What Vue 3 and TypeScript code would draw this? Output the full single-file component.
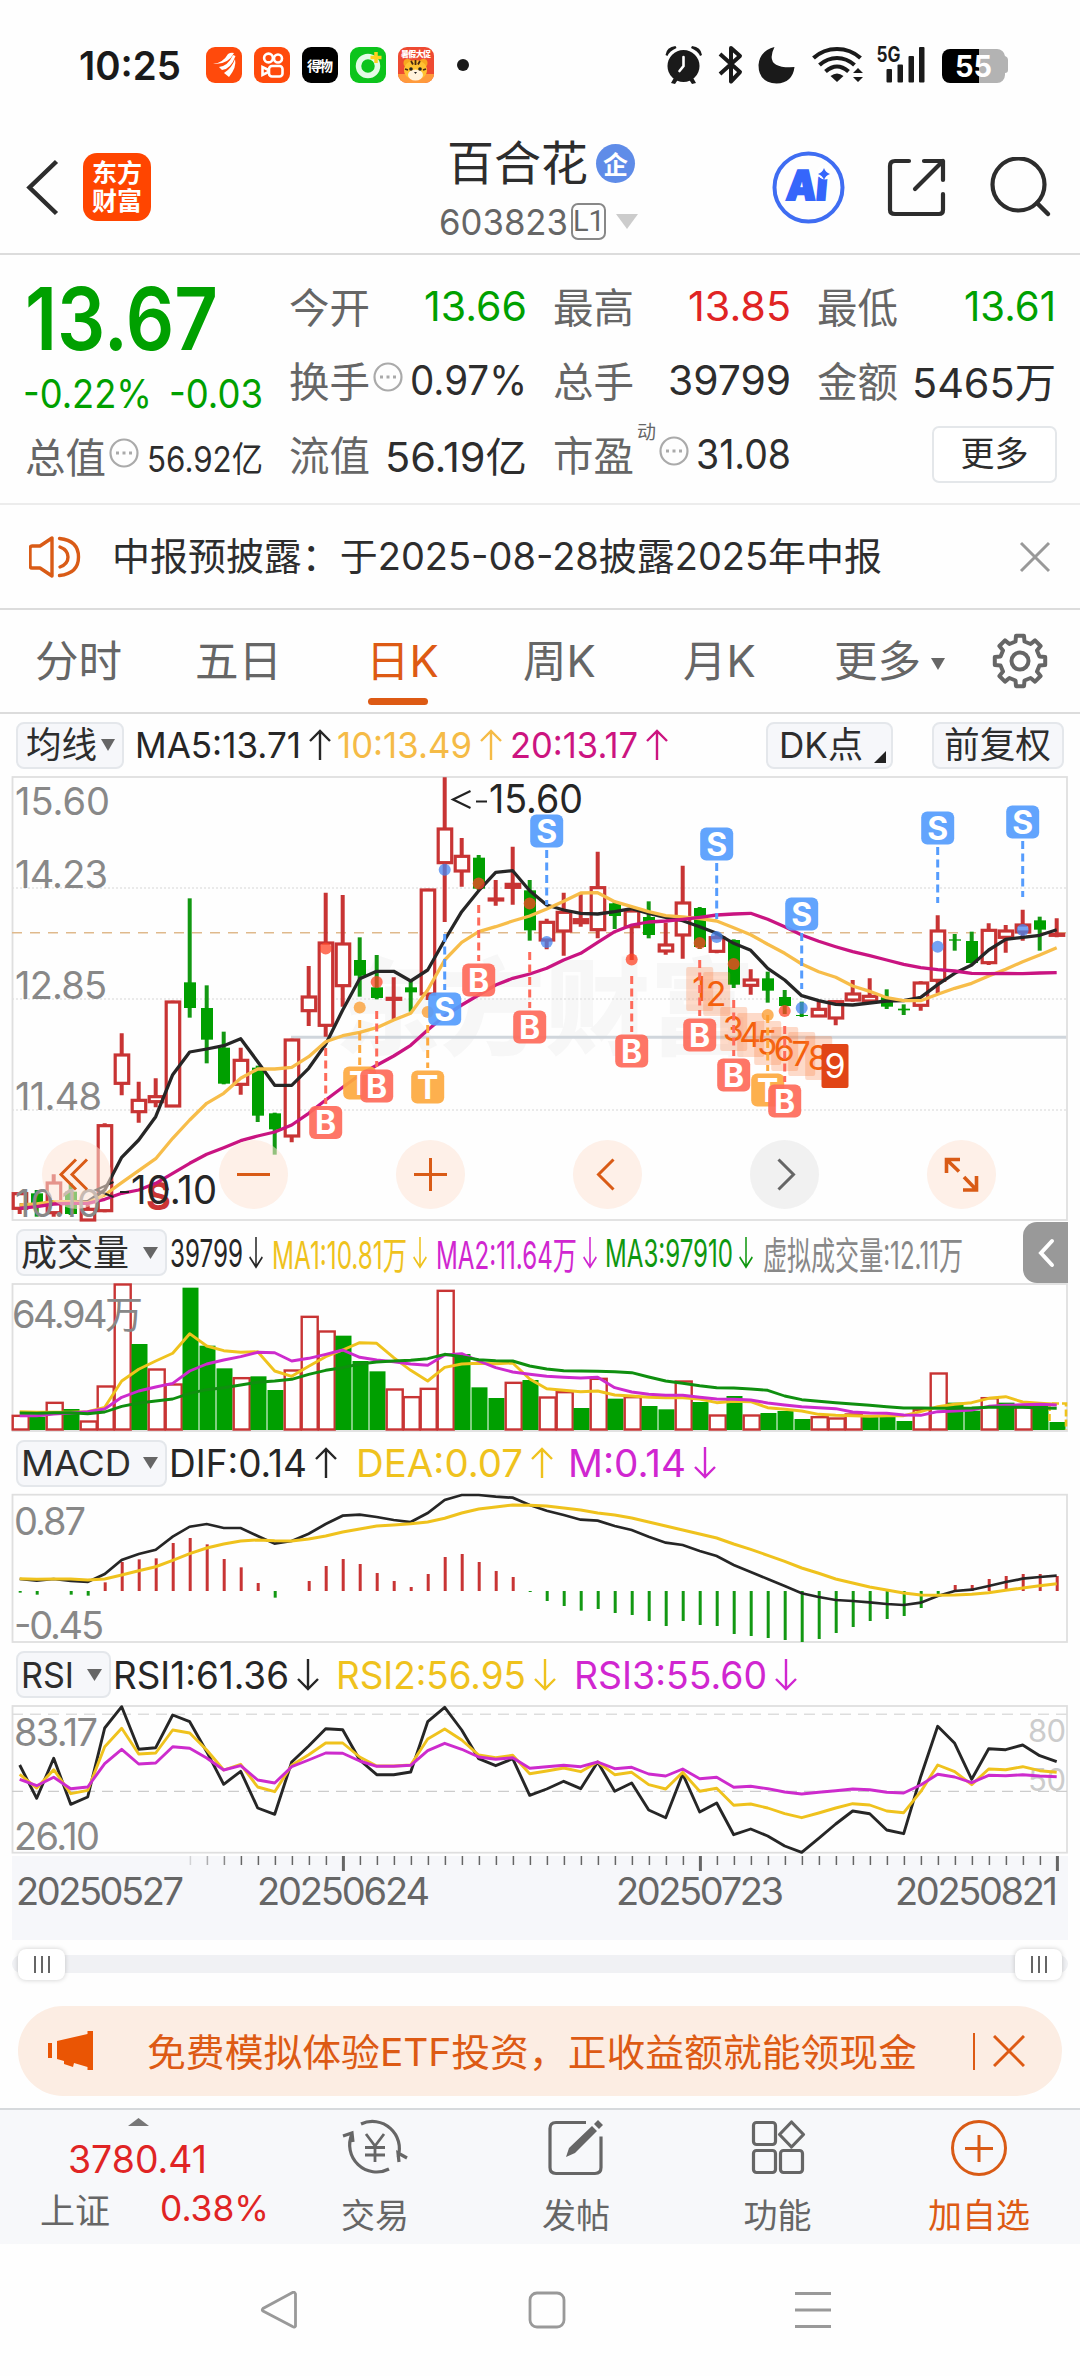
<script setup lang="ts">
import { h } from 'vue'
import type { FunctionalComponent, ObjectDirective } from 'vue'

type Row = [number, number, number, number, number]

// Squeezes or widens a label so that it takes exactly the given width.
const vFit: ObjectDirective<HTMLElement, number> = {
  mounted(el, { value }) {
    const natural = el.getBoundingClientRect().width
    if (!natural) return
    el.style.transformOrigin = '0 50%'
    el.style.transform = `scaleX(${value / natural})`
    el.style.marginRight = `${value - natural}px`
  },
}

const Arrow: FunctionalComponent<{ up?: boolean; w?: number }> = (p) =>
  h('svg', { width: p.w ?? 22, height: 34, viewBox: '0 0 22 34', preserveAspectRatio: 'none', fill: 'none', stroke: 'currentColor', 'stroke-width': 2.4 }, [
    h('path', { d: p.up ? 'M11 32V3M1 13L11 3l10 10' : 'M11 1v30M1 21l10 10 10-10' }),
  ])
Arrow.props = { up: Boolean, w: Number }

const cx = (i: number) => 19.7 + 17 * i
const path = (ys: number[], f: (v: number) => number) =>
  ys.map((v, i) => `${i ? 'L' : 'M'}${cx(i).toFixed(1)} ${f(v).toFixed(1)}`).join('')

// Price panel: 1 = rising, 0 = falling; high, body top, body bottom, low.
const py = (v: number) => 760 + v / 3
const candles: Row[] = [
  [1, 1297, 1298, 1345, 1362], [0, 1290, 1300, 1330, 1370], [1, 1243, 1266, 1358, 1370], [0, 1270, 1295, 1362, 1365],
  [1, 1330, 1345, 1380, 1382], [1, 1090, 1094, 1352, 1357], [1, 820, 882, 970, 1006], [1, 965, 1018, 1055, 1088],
  [1, 955, 1007, 1025, 1042], [1, 722, 723, 1038, 1040], [0, 415, 667, 744, 773], [0, 676, 744, 839, 910],
  [0, 815, 863, 971, 973], [1, 863, 898, 973, 1004], [0, 917, 923, 1067, 1086], [0, 1058, 1060, 1108, 1184],
  [1, 836, 837, 1128, 1147], [1, 618, 708, 752, 798], [1, 398, 546, 796, 830], [1, 405, 549, 677, 740],
  [0, 532, 600, 647, 710], [0, 585, 682, 714, 718], [1, 652, 712, 718, 777], [0, 660, 682, 697, 755],
  [1, 386, 387, 702, 720], [1, 52, 204, 308, 486], [1, 234, 286, 333, 380], [0, 285, 293, 386, 390],
  [1, 360, 414, 417, 437], [1, 260, 370, 382, 434], [0, 360, 391, 511, 542], [1, 476, 484, 540, 568],
  [1, 398, 454, 513, 587], [1, 400, 476, 488, 500], [1, 275, 380, 509, 535], [0, 425, 430, 468, 507],
  [1, 440, 450, 500, 600], [0, 424, 471, 525, 535], [1, 488, 552, 573, 584], [1, 317, 426, 525, 596],
  [0, 441, 444, 561, 567], [1, 520, 530, 574, 580], [0, 538, 540, 674, 684], [1, 628, 657, 676, 704],
  [0, 635, 655, 692, 728], [0, 690, 711, 738, 762], [0, 725, 765, 768, 771], [1, 720, 745, 768, 770],
  [1, 720, 722, 774, 796], [1, 660, 699, 720, 725], [1, 655, 706, 723, 724], [0, 688, 711, 740, 747],
  [0, 733, 746, 751, 765], [1, 664, 666, 736, 752], [1, 466, 510, 661, 700], [0, 522, 538, 542, 572],
  [0, 515, 543, 609, 611], [1, 490, 508, 608, 615], [1, 495, 510, 532, 578], [1, 449, 492, 516, 542],
  [0, 470, 481, 509, 572], [1, 475, 520, 523, 532],
]
const ma5 = [1335, 1335, 1325, 1325, 1325, 1290, 1192, 1140, 1070, 944, 876, 867, 857, 836, 905, 976, 976, 925, 853, 750, 656, 634, 634, 663, 630, 540, 455, 392, 337, 332, 392, 435, 450, 460, 462, 455, 446, 460, 472, 482, 500, 520, 550, 571, 625, 660, 707, 722, 733, 735, 729, 723, 722, 712, 674, 640, 615, 570, 538, 532, 526, 509]
const ma10 = [1335, 1332, 1325, 1325, 1328, 1305, 1268, 1232, 1196, 1135, 1080, 1030, 1000, 955, 927, 927, 922, 890, 845, 827, 817, 803, 780, 760, 690, 600, 547, 515, 500, 483, 468, 447, 424, 399, 398, 425, 440, 455, 467, 471, 476, 483, 503, 524, 553, 580, 612, 635, 652, 678, 694, 713, 722, 722, 703, 685, 670, 648, 628, 605, 585, 563]
const ma20 = [1345, 1340, 1332, 1330, 1330, 1318, 1300, 1290, 1270, 1240, 1210, 1183, 1163, 1142, 1128, 1116, 1095, 1060, 1020, 982, 945, 916, 888, 856, 810, 768, 735, 705, 675, 655, 642, 625, 600, 580, 547, 515, 495, 486, 483, 478, 472, 465, 462, 460, 478, 500, 525, 544, 560, 575, 587, 600, 613, 623, 629, 633, 640, 641, 640, 641, 639, 638]

// Signal badges: letter, candle index, badge centre, dashed line from / to, dot.
type Mark = ['B' | 'S' | 'T', number, number, number, number, number]
const marks: Mark[] = [
  ['B', 18, 1122.5, 1048, 1104, 948.5], ['T', 20, 1083, 1020, 1065, 1007.5], ['B', 21, 1086, 1011, 1067, 982],
  ['T', 24, 1087, 1025, 1068, 1012], ['S', 25, 1009, 934, 990, 869.7], ['B', 27, 980, 905, 961, 883.5],
  ['B', 30, 1027, 952, 1008, 903.5], ['S', 31, 831, 850, 905, 942], ['B', 36, 1051, 976, 1032, 959.5],
  ['B', 40, 1035, 960, 1016, 943], ['S', 41, 844, 863, 919, 937], ['B', 42, 1075, 1000, 1056, 964],
  ['T', 44, 1090, 1015, 1071, 1015], ['B', 45, 1101, 1026, 1082, 1011], ['S', 46, 914, 933, 989, 1008],
  ['S', 54, 828, 847, 903, 946.7], ['S', 59, 822, 841, 897, 930],
]
const markColor = { B: '#fe6a5a', S: '#559cfd', T: '#fda93f' }
const counts: [string, number, number][] = [
  ['1', 40, 967], ['2', 41, 972], ['3', 42, 1007], ['4', 43, 1013], ['5', 44, 1021], ['6', 45, 1027], ['7', 46, 1032], ['8', 47, 1036],
]

// Volume panel: tops of the bars, negative = falling day.
const vy = (v: number) => 1215 + v / 3
const volumes = [601, -605, 562, -582, 618, 513, 207, -387, 462, 507, -218, -392, -460, 488, -484, -525, 465, 304, 348, -362, -438, -469, 522, 545, 520, 226, -417, -517, -549, 502, -495, 546, 530, -579, 490, -551, 545, -573, -583, 498, -561, 600, -543, 600, -594, -588, -612, 605, 609, 597, -603, -605, -618, 583, 474, -563, -587, 548, -563, 575, -571, -621]
const v1 = [590, 592, 592, 592, 590, 577, 498, 463, 438, 415, 356, 393, 407, 412, 410, 468, 484, 454, 425, 405, 383, 385, 428, 466, 498, 457, 447, 445, 446, 444, 492, 521, 526, 530, 528, 540, 543, 547, 548, 548, 552, 563, 559, 560, 578, 583, 588, 598, 601, 602, 604, 602, 602, 590, 575, 568, 563, 550, 545, 561, 565, 568]
const v2 = [602, 602, 597, 594, 590, 582, 547, 528, 516, 505, 468, 447, 435, 425, 412, 413, 438, 430, 418, 405, 427, 435, 440, 447, 451, 420, 416, 438, 458, 471, 478, 484, 487, 489, 487, 518, 531, 538, 541, 541, 547, 552, 553, 555, 564, 570, 575, 578, 581, 591, 594, 595, 600, 601, 590, 588, 585, 574, 571, 569, 568, 570]
const v3 = [594, 595, 593, 593, 596, 591, 574, 564, 558, 552, 535, 524, 518, 510, 502, 498, 493, 478, 466, 458, 447, 441, 438, 436, 431, 418, 425, 434, 437, 438, 453, 462, 467, 468, 469, 470, 473, 486, 498, 505, 512, 518, 519, 522, 526, 543, 554, 559, 563, 567, 571, 575, 579, 579, 580, 580, 579, 577, 577, 577, 579, 580]

// MACD and RSI panels
const my = (v: number) => 1480 + v / 3
const hist = [338, 344, 333, 344, 347, 307, 246, 238, 235, 189, 174, 193, 237, 262, 309, 353, 333, 303, 258, 237, 252, 279, 303, 321, 282, 231, 222, 246, 273, 291, 336, 363, 378, 392, 387, 399, 405, 423, 438, 423, 435, 438, 462, 468, 474, 480, 486, 477, 459, 441, 423, 417, 408, 384, 343, 315, 315, 297, 288, 282, 282, 288]
const dif = [297, 302, 297, 303, 306, 282, 240, 222, 209, 170, 140, 132, 144, 144, 168, 191, 183, 161, 132, 107, 104, 111, 120, 126, 99, 60, 45, 45, 50, 53, 75, 92, 105, 119, 122, 138, 150, 170, 188, 195, 213, 228, 255, 276, 297, 318, 340, 351, 360, 363, 367, 372, 375, 368, 348, 333, 329, 318, 306, 296, 291, 287]
const dea = [296, 298, 297, 297, 300, 297, 285, 272, 260, 241, 221, 204, 192, 183, 180, 182, 183, 177, 168, 156, 147, 138, 135, 131, 126, 115, 99, 87, 81, 75, 76, 78, 84, 90, 99, 105, 114, 126, 138, 150, 162, 174, 192, 208, 226, 244, 264, 280, 297, 309, 321, 330, 339, 345, 346, 345, 343, 338, 331, 324, 317, 311]
const rsi1 = [855, 955, 835, 973, 951, 744, 680, 808, 803, 705, 725, 815, 913, 874, 984, 1003, 846, 798, 746, 749, 840, 884, 884, 876, 725, 682, 750, 836, 857, 836, 946, 927, 904, 926, 846, 934, 909, 990, 1013, 882, 996, 969, 1064, 1047, 1068, 1098, 1117, 1075, 1032, 993, 1001, 1050, 1061, 890, 739, 790, 898, 806, 809, 795, 827, 845]
const rsi2 = [883, 924, 869, 941, 931, 800, 745, 822, 819, 750, 759, 810, 870, 853, 921, 935, 856, 824, 789, 789, 831, 858, 858, 855, 777, 747, 780, 825, 833, 826, 881, 873, 864, 875, 846, 884, 877, 914, 927, 877, 934, 925, 976, 972, 984, 1001, 1013, 999, 984, 971, 975, 993, 998, 935, 855, 875, 914, 867, 869, 860, 872, 877]
const rsi3 = [898, 917, 892, 926, 921, 851, 808, 852, 849, 800, 805, 834, 870, 857, 900, 909, 860, 840, 819, 820, 843, 859, 859, 856, 812, 790, 808, 831, 838, 833, 865, 860, 856, 860, 846, 866, 862, 882, 888, 867, 896, 892, 922, 919, 926, 936, 942, 937, 932, 927, 929, 937, 939, 915, 883, 891, 908, 886, 887, 884, 888, 890]

const ticks = Array.from({ length: 52 }, (_, k) => k + 10)
const isMajor = (i: number) => i === 19 || i === 40 || i === 61
const gear = (() => {
  const pts: string[] = []
  for (let k = 0; k < 8; k++) {
    for (const [off, r] of [[-13, 20], [-9, 25.5], [9, 25.5], [13, 20]]) {
      const a = ((k * 45 + off - 90) * Math.PI) / 180
      pts.push(`${(28 + r * Math.cos(a)).toFixed(1)},${(28 + r * Math.sin(a)).toFixed(1)}`)
    }
  }
  return pts.join(' ')
})()
</script>

<template>
  <div class="screen">
    <div class="status">
      <span v-fit="102" class="clock">10:25</span>
      <div class="apps">
        <svg width="36" height="36" viewBox="0 0 36 36"><rect width="36" height="36" rx="9" fill="#ff4a0c" /><path d="M7 17Q17 16 22 7q3-2 6-1Q22 18 7 17zM13 20q9-1 14-12l2.500 1Q25 22 16 23zM18 26q8-5 11-14 2 8-6 18z" fill="#fff" /></svg>
        <svg width="36" height="36" viewBox="0 0 36 36"><rect width="36" height="36" rx="9" fill="#ff4a0c" /><g fill="none" stroke="#fff" stroke-width="2.6"><circle cx="14.500" cy="11" r="4.400" /><circle cx="24" cy="11.500" r="4" /><rect x="15" y="19" width="13.500" height="10.500" rx="3" /><path d="M14.500 23l-6-3v8l6-3z" /></g></svg>
        <svg width="36" height="36" viewBox="0 0 36 36"><rect width="36" height="36" rx="9" fill="#000" /><text x="5" y="23.500" font-size="14" font-weight="700" fill="#fff" textLength="26">得物</text></svg>
        <svg width="36" height="36" viewBox="0 0 36 36"><rect width="36" height="36" rx="9" fill="#0cc41c" /><circle cx="18" cy="19" r="9.500" fill="none" stroke="#e4fbe6" stroke-width="5.500" /><path d="M26 5v11M20.500 10.500h11" stroke="#ffd21e" stroke-width="3.500" /></svg>
        <svg width="36" height="36" viewBox="0 0 36 36"><rect width="36" height="36" rx="9" fill="#ee4a32" /><text x="3" y="9.500" font-size="8" font-weight="900" fill="#fff" textLength="30">暑假大促</text><path d="M0 27h36a9 9 0 0 1-9 9H9a9 9 0 0 1-9-9z" fill="#ff9a3c" /><circle cx="9.500" cy="16" r="4" fill="#f7a81f" /><circle cx="25.500" cy="16" r="4" fill="#f7a81f" /><ellipse cx="17.500" cy="23" rx="11.500" ry="10" fill="#ffc232" /><ellipse cx="17.500" cy="28" rx="7.500" ry="5.500" fill="#fff3dc" /><circle cx="13" cy="22" r="1.800" fill="#222" /><circle cx="22" cy="22" r="1.800" fill="#222" /><path d="M17.500 13v5M13 14l2 3.500M22 14l-2 3.500M7 22l3 1M28 22l-3 1" stroke="#4a2a10" stroke-width="1.800" /><path d="M16 25h3l-1.500 2z" fill="#222" /></svg>
      </div>
      <i class="dot"></i>
      <svg class="sys" width="350" height="44" viewBox="660 43 350 44">
        <g fill="#1a1a1a">
          <circle cx="683.500" cy="66" r="16" /><path d="M665.500 55q1-8 10-9l1 2q-7 3-9 8zM702 55q-1-8-10-9l-1 2q7 3 9 8z" />
          <path d="M671 83l4-7 4 2-4 6zM696 83l-4-7-4 2 4 6z" />
          <path d="M774.500 47q-11 22 20 20-2 16-18 16.500-18-1-18-18.500 1-14 16-18z" />
          <path d="M837 82l-6.500-6q6.500-5 13 0z" /><path d="M858 68l5 5h-10zM858 82l5-5h-10z" />
          <rect x="886.500" y="69" width="5.500" height="13.500" rx="1" /><rect x="897.500" y="64.500" width="5.500" height="18" rx="1" /><rect x="908.500" y="56" width="5.500" height="26.500" rx="1" /><rect x="919" y="47" width="5.500" height="35.500" rx="1" />
          <text x="876.500" y="61.500" font-size="21" font-weight="700" textLength="24" lengthAdjust="spacingAndGlyphs">5G</text>
        </g>
        <path d="M683.500 57v9l-4 5" fill="none" stroke="#fff" stroke-width="2.600" stroke-linecap="round" />
        <path d="M720 54l20 18-9 9.500V48l9 8-20 18" fill="none" stroke="#1a1a1a" stroke-width="4" stroke-linejoin="round" />
        <g fill="none" stroke="#1a1a1a" stroke-width="4.200"><path d="M813.500 58q10-9 23.500-9t23.500 9" /><path d="M819.500 65q8-7 17.500-7t17.500 7" /><path d="M825.500 71.500q6-5 11.500-5t11.500 5" /></g>
        <path d="M950 49h30v34h-30a8 8 0 0 1-8-8V57a8 8 0 0 1 8-8z" fill="#000" /><path d="M979 49h18a8 8 0 0 1 8 7q3 1 3 4v10q0 3-3 3v2a8 8 0 0 1-8 8h-18z" fill="#b3b3b3" />
        <text x="955" y="77" font-size="30" font-weight="700" fill="#fff" textLength="37" lengthAdjust="spacingAndGlyphs">55</text>
      </svg>
    </div>

    <header class="head">
      <svg class="back" width="34" height="58" viewBox="25 159 34 58"><path d="M56.500 161.500L29.500 187.500 56.500 213.500" fill="none" stroke="#2d2d2d" stroke-width="4.500" /></svg>
      <div class="logo"><b>东方</b><b>财富</b></div>
      <div class="title">
        <div class="name"><span>百合花</span><em>企</em></div>
        <div class="code"><span v-fit="129">603823</span><i>L1</i><svg width="22" height="16"><path d="M0 0h22L11 15z" fill="#ccc" /></svg></div>
      </div>
      <div class="tools">
        <svg width="74" height="74" viewBox="771 150 74 74"><circle cx="808.500" cy="187.500" r="34" fill="none" stroke="#3f6df2" stroke-width="4" /><g transform="skewX(-5)"><text x="803" y="200" font-size="41" font-weight="900" fill="#3566fb" stroke="#3566fb" stroke-width="2" textLength="41" lengthAdjust="spacingAndGlyphs">Ai</text></g><circle cx="825" cy="172" r="7.500" fill="#fff" /><path d="M824 168q1.500 4.500 6 6-4.500 1.500-6 6-1.500-4.500-6-6 4.500-1.500 6-6z" fill="#3566fb" /></svg>
        <svg width="62" height="62" viewBox="886 157 62 62"><path d="M909 161h-14q-5 0-5 5v44q0 4 5 4h44q4 0 4-4v-16M924 161h19v19M943 161l-28 28" fill="none" stroke="#2d2d2d" stroke-width="4.200" stroke-linecap="round" stroke-linejoin="round" /></svg>
        <svg width="62" height="62" viewBox="990 157 62 62"><circle cx="1018.500" cy="184.500" r="26" fill="none" stroke="#2d2d2d" stroke-width="4.200" /><path d="M1037 203l11 11" stroke="#2d2d2d" stroke-width="4.500" stroke-linecap="round" /></svg>
      </div>
    </header>

    <section class="quote">
      <div class="main">
        <div class="price green"><span v-fit="193">13.67</span></div>
        <div class="chg green"><span v-fit="129">-0.22%</span><span v-fit="94">-0.03</span></div>
        <div class="cell last"><label>总值</label><svg class="tip" width="30" height="30"><circle cx="15" cy="15" r="13.500" /><path d="M7 13.500h3v3H7zM13.500 13.500h3v3h-3zM20 13.500h3v3h-3z" /></svg><span v-fit="116" class="sm">56.92亿</span></div>
      </div>
      <div class="cells">
        <div class="cell"><label>今开</label><span v-fit="103" class="green">13.66</span></div>
        <div class="cell"><label>最高</label><span v-fit="103" class="red">13.85</span></div>
        <div class="cell"><label>最低</label><span v-fit="92" class="green">13.61</span></div>
        <div class="cell"><label>换手</label><svg class="tip" width="30" height="30"><circle cx="15" cy="15" r="13.500" /><path d="M7 13.500h3v3H7zM13.500 13.500h3v3h-3zM20 13.500h3v3h-3z" /></svg><span v-fit="117">0.97%</span></div>
        <div class="cell"><label>总手</label><span v-fit="123">39799</span></div>
        <div class="cell"><label>金额</label><span v-fit="144">5465万</span></div>
        <div class="cell"><label>流值</label><span v-fit="142">56.19亿</span></div>
        <div class="cell pe"><label>市盈</label><sup>动</sup><svg class="tip" width="30" height="30"><circle cx="15" cy="15" r="13.500" /><path d="M7 13.500h3v3H7zM13.500 13.500h3v3h-3zM20 13.500h3v3h-3z" /></svg><span v-fit="95">31.08</span></div>
        <div class="cell end"><button class="more">更多</button></div>
      </div>
    </section>

    <section class="notice">
      <svg width="52" height="46" viewBox="29 533 52 46"><g fill="none" stroke="#d95b16" stroke-width="3.400"><path d="M52 537v38l-12-8h-8q-2 0-2-3v-16q0-3 2-3h8z" stroke-linejoin="round" /><path d="M60 546q8 3 8 10t-8 10M59.500 537.500q19 2 19 18.500t-19 18.500" stroke-linecap="round" /></g></svg>
      <p><span v-fit="770">中报预披露：于2025-08-28披露2025年中报</span></p>
      <svg width="32" height="32"><path d="M2 2l28 28M30 2L2 30" stroke="#999" stroke-width="3" /></svg>
    </section>

    <nav class="tabs">
      <span>分时</span><span>五日</span><span class="on">日K</span><span>周K</span><span>月K</span>
      <span>更多<svg width="14" height="12"><path d="M0 0h14L7 12z" fill="#666" /></svg></span>
      <svg width="56" height="56"><polygon :points="gear" fill="none" stroke="#666" stroke-width="4" stroke-linejoin="round" /><circle cx="28" cy="28" r="8.500" fill="none" stroke="#666" stroke-width="4" /></svg>
    </nav>

    <div class="legend ma">
      <button class="pick p0"><span v-fit="71">均线</span><svg width="14" height="12"><path d="M0 0h14L7 12z" fill="#666" /></svg></button>
      <span class="it k"><span v-fit="166">MA5:13.71</span><Arrow :up="true" /></span>
      <span class="it y"><span v-fit="135">10:13.49</span><Arrow :up="true" /></span>
      <span class="it p"><span v-fit="128">20:13.17</span><Arrow :up="true" /></span>
      <button class="pick dk"><span v-fit="84">DK点</span><svg width="12" height="12"><path d="M12 0v12H0z" fill="#222" /></svg></button>
      <button class="pick fq"><span v-fit="107">前复权</span></button>
    </div>

    <svg class="chart" width="1080" height="446" viewBox="0 776 1080 446">
      <text x="335" y="1046" font-size="105" font-weight="900" fill="#f7f7f7">东方财富</text>
      <path d="M12 888H1067M12 999H1067M12 1110H1067" stroke="#e3e3e3" stroke-width="1.500" stroke-dasharray="2 2" />
      <path d="M291 1037.300H1067" stroke="#d0d6dc" stroke-width="3" />
      <rect x="12.500" y="777" width="1054.500" height="443" fill="none" stroke="#dfdfdf" stroke-width="1.800" />
      <path d="M12 932.700H1067" stroke="#dfb98c" stroke-width="1.600" stroke-dasharray="10 8" />
      <text x="146" y="1210" font-size="38" font-weight="700" fill="#cb3434">S</text>
      <g v-for="(c, i) in candles" :key="i">
        <template v-if="c[0]">
          <path :d="`M${cx(i)} ${py(c[1])}V${py(c[2])}M${cx(i)} ${py(c[3])}V${py(c[4])}`" stroke="#c83434" stroke-width="4" />
          <rect :x="cx(i) - 6.500" :y="py(c[2]) + 1" width="13.500" :height="Math.max(1, py(c[3]) - py(c[2]) - 1)" fill="#fff" stroke="#c83434" stroke-width="3.200" />
        </template>
        <template v-else>
          <path :d="`M${cx(i)} ${py(c[1])}V${py(c[4])}`" stroke="#129812" stroke-width="4" />
          <rect :x="cx(i) - 5.700" :y="py(c[2])" width="12" :height="py(c[3]) - py(c[2])" fill="#009f00" />
        </template>
      </g>
      <g fill="none" stroke-width="3.300" stroke-linejoin="round">
        <path :d="path(ma5, py)" stroke="#262626" /><path :d="path(ma10, py)" stroke="#f7bd4a" /><path :d="path(ma20, py)" stroke="#c91481" />
      </g>
      <g class="lbl">
        <text x="15" y="815" textLength="95">15.60</text><text x="15" y="888" textLength="93">14.23</text>
        <text x="15" y="999" textLength="92">12.85</text><text x="15" y="1110" textLength="87">11.48</text><text x="15" y="1217" textLength="86">10.10</text>
      </g>
      <g fill="none" stroke="#222" stroke-width="2.200"><path d="M470.500 791L453 799.500l17.500 8.500M476 801.500h11" /><path d="M113.500 1182L96 1190l17.500 7M120 1192h9" /></g>
      <text x="489" y="813" font-size="39" fill="#262626" textLength="94" lengthAdjust="spacingAndGlyphs">15.60</text>
      <text x="131" y="1203.500" font-size="39" fill="#262626" textLength="86" lengthAdjust="spacingAndGlyphs">10.10</text>

      <g v-for="c in counts" :key="c[0]">
        <rect :x="cx(c[1]) - 13.500" :y="c[2]" width="27" height="44" rx="2" fill="#fb7a3c" fill-opacity=".27" />
        <text :x="cx(c[1]) - 0.500" :y="c[2] + 34" font-size="34" fill="#f4600c" text-anchor="middle">{{ c[0] }}</text>
      </g>
      <rect x="821.500" y="1044" width="27" height="44" rx="2" fill="#e14516" /><text x="835" y="1078" font-size="34" fill="#fff" text-anchor="middle">9</text>
      <g v-for="(m, i) in marks" :key="'m' + i">
        <path :d="`M${cx(m[1])} ${m[3]}V${m[4]}`" :stroke="markColor[m[0]]" stroke-width="3" stroke-dasharray="8 4.500" />
        <circle :cx="cx(m[1])" :cy="m[5]" r="6" :fill="m[0] === 'S' ? '#4684f0' : m[0] === 'T' ? '#fb9a2a' : '#ff4326'" fill-opacity=".75" />
        <rect :x="cx(m[1]) - 16.500" :y="m[2] - 16.500" width="33" height="33" rx="6" :fill="markColor[m[0]]" fill-opacity=".92" />
        <text :x="cx(m[1])" :y="m[2] + 11.500" font-size="32" font-weight="700" fill="#fff" text-anchor="middle">{{ m[0] }}</text>
      </g>

      <g fill="#fee4d6" fill-opacity=".55"><circle cx="76.500" cy="1174.500" r="34.500" /><circle cx="253.500" cy="1174.500" r="34.500" /><circle cx="430.500" cy="1174.500" r="34.500" /><circle cx="607.500" cy="1174.500" r="34.500" /><circle cx="961.500" cy="1174.500" r="34.500" /></g>
      <circle cx="784.500" cy="1174.500" r="34.500" fill="#e8e8e8" fill-opacity=".6" />
      <g fill="none" stroke="#d95b16" stroke-width="3"><path d="M76 1159.500l-15 15 15 15M87 1159.500l-15 15 15 15M237 1174.500h33M414 1174.500h33M430.500 1158v33M613.500 1159.500l-15 15 15 15" /><path d="M960 1159.500h-13.500v13.500M946.500 1159.500l12.500 12M963 1190h13.500v-14M976.500 1190l-12.500-13" stroke-width="3.600" /></g>
      <path d="M778.500 1159.500l15 15-15 15" fill="none" stroke="#666" stroke-width="3" />
    </svg>

    <div class="legend vol">
      <button class="pick p1"><span v-fit="108">成交量</span><svg width="15" height="12"><path d="M0 0h15L7.500 12z" fill="#666" /></svg></button>
      <span class="it k"><span v-fit="73">39799</span><Arrow :w="14" /></span>
      <span class="it g1"><span v-fit="135">MA1:10.81万</span><Arrow :w="14" /></span>
      <span class="it m"><span v-fit="141">MA2:11.64万</span><Arrow :w="14" /></span>
      <span class="it g"><span v-fit="128">MA3:97910</span><Arrow :w="14" /></span>
      <span class="it s"><span v-fit="200">虚拟成交量:12.11万</span></span>
      <span class="fold"><svg width="18" height="30"><path d="M15 3L4 15l11 12" fill="none" stroke="#fff" stroke-width="4" stroke-linecap="round" /></svg></span>
    </div>

    <svg class="chart" width="1080" height="150" viewBox="0 1283 1080 150">
      <rect x="12.500" y="1284" width="1054.500" height="147" fill="none" stroke="#dfdfdf" stroke-width="1.800" />
      <template v-for="(v, i) in volumes" :key="i">
        <rect v-if="v > 0" :x="cx(i) - 7" :y="vy(v) + 0.500" width="16" :height="1429 - vy(v)" fill="#fff" stroke="#c83434" stroke-width="2.400" />
        <rect v-else :x="cx(i) - 7.200" :y="vy(-v)" width="16" :height="1430 - vy(-v)" fill="#009f00" />
      </template>
      <path d="M1049.500 1421V1403.500H1066V1430" fill="none" stroke="#efc21d" stroke-width="2.600" stroke-dasharray="7 3" />
      <g fill="none" stroke-width="2.900" stroke-linejoin="round"><path :d="path(v1, vy)" stroke="#efc21d" /><path :d="path(v2, vy)" stroke="#cd2bcd" /><path :d="path(v3, vy)" stroke="#0f8f0f" /></g>
      <g class="lbl"><text x="12" y="1328" textLength="131">64.94万</text></g>
    </svg>

    <div class="legend macd">
      <button class="pick p1"><span v-fit="110">MACD</span><svg width="15" height="12"><path d="M0 0h15L7.500 12z" fill="#666" /></svg></button>
      <span class="it k"><span v-fit="138">DIF:0.14</span><Arrow :up="true" /></span>
      <span class="it g1"><span v-fit="167">DEA:0.07</span><Arrow :up="true" /></span>
      <span class="it m"><span v-fit="118">M:0.14</span><Arrow /></span>
    </div>

    <svg class="chart" width="1080" height="151" viewBox="0 1493 1080 151">
      <rect x="12.500" y="1494.700" width="1054.500" height="147.300" fill="none" stroke="#dfdfdf" stroke-width="1.800" />
      <path v-for="(v, i) in hist" :key="i" :d="`M${cx(i) + 0.500} 1591V${my(v)}`" :stroke="v < 333 ? '#c83434' : '#129812'" stroke-width="3" />
      <path :d="path(dif, my)" fill="none" stroke="#262626" stroke-width="2.700" />
      <path :d="path(dea, my)" fill="none" stroke="#efc21d" stroke-width="3" />
      <g class="lbl"><text x="14" y="1534.500" textLength="72">0.87</text><text x="14" y="1638.500" textLength="90">-0.45</text></g>
    </svg>

    <div class="legend rsi">
      <button class="pick p2"><span v-fit="53">RSI</span><svg width="15" height="12"><path d="M0 0h15L7.500 12z" fill="#666" /></svg></button>
      <span class="it k"><span v-fit="176">RSI1:61.36</span><Arrow /></span>
      <span class="it g1"><span v-fit="190">RSI2:56.95</span><Arrow /></span>
      <span class="it m"><span v-fit="193">RSI3:55.60</span><Arrow /></span>
    </div>

    <svg class="chart" width="1080" height="150" viewBox="0 1705 1080 150">
      <rect x="12.500" y="1706" width="1054.500" height="146.700" fill="none" stroke="#dfdfdf" stroke-width="1.800" />
      <path d="M12 1714.300H1067" stroke="#ddd" stroke-width="1.500" stroke-dasharray="11 7" /><path d="M12 1791.300H1067" stroke="#ccc" stroke-width="1.300" stroke-dasharray="11 7" />
      <g class="lbl"><text x="14" y="1745.500" textLength="84">83.17</text><text x="14" y="1849.500" textLength="86">26.10</text></g>
      <g class="lbl lt"><text x="1028" y="1741.500" textLength="38">80</text><text x="1028" y="1791" textLength="38">50</text></g>
      <g fill="none" stroke-width="2.900" stroke-linejoin="round"><path :d="path(rsi1, my)" stroke="#262626" /><path :d="path(rsi2, my)" stroke="#efc21d" /><path :d="path(rsi3, my)" stroke="#cd2bcd" /></g>
    </svg>

    <svg class="chart" width="1080" height="85" viewBox="0 1855 1080 85">
      <rect x="12" y="1856" width="1056" height="84" fill="#f6f7fa" />
      <path v-for="i in ticks" :key="i" :d="`M${cx(i) + 0.700} 1856V${isMajor(i) ? 1871 : 1865}`" stroke="#666" :stroke-width="isMajor(i) ? 3 : 1.500" :stroke-opacity="i < 13 ? (i - 9) / 4 : 1" />
      <g class="date"><text x="16" y="1904.500" textLength="168">20250527</text><text x="257" y="1904.500" textLength="173">20250624</text><text x="616" y="1904.500" textLength="168">20250723</text><text x="895" y="1904.500" textLength="163">20250821</text></g>
    </svg>

    <div class="slider"><div class="rail"><i></i><i></i></div></div>

    <div class="banner">
      <svg width="46" height="40" viewBox="48 2031 46 40"><path d="M57 2041L87.500 2034V2031h5.500v39h-5.500v-3L74 2063l-1 4-9-3v-3l-7-2zM48 2043h4v15h-4z" fill="#ea5504" /></svg>
      <span v-fit="770">免费模拟体验ETF投资，正收益额就能领现金</span>
      <i></i>
      <svg width="32" height="32"><path d="M1 1l30 30M31 1L1 31" stroke="#dd5a14" stroke-width="3" /></svg>
    </div>

    <footer class="foot">
      <div class="index">
        <svg width="21" height="8"><path d="M0 8L10.500 0 21 8z" fill="#777" /></svg>
        <div class="val"><span v-fit="139">3780.41</span></div>
        <div class="sub"><label>上证</label><span v-fit="109">0.38%</span></div>
      </div>
      <div class="act">
        <svg width="66" height="60" viewBox="342 2118 66 60"><g fill="none" stroke="#666" stroke-width="3.200"><path d="M361 2124a27 27 0 0 1 37 33M389 2169a27 27 0 0 1-37-35M343 2136l9-3 1 9M399 2162l-1-9 9 5" /><path d="M366 2134l9 12 9-12M375 2146v16M365 2147.500h20M365 2155h20" stroke-width="2.800" /></g></svg>
        <span>交易</span>
      </div>
      <div class="act">
        <svg width="56" height="60" viewBox="550 2118 56 60"><path d="M588 2122.500h-30q-6 0-6 6v39q0 6 6 6h39q6 0 6-6v-31" fill="none" stroke="#666" stroke-width="3.200" /><path d="M568 2157l3-9 23-22 5 5-22 22zM596 2124l4-4 5 5-4 4z" fill="#666" /></svg>
        <span>发帖</span>
      </div>
      <div class="act">
        <svg width="56" height="60" viewBox="750 2118 56 60"><g fill="none" stroke="#666" stroke-width="3.200"><rect x="753.500" y="2122.500" width="22" height="22" rx="3" /><rect x="753.500" y="2150.500" width="22" height="22" rx="3" /><rect x="780.500" y="2150.500" width="22" height="22" rx="3" /><path d="M791.500 2122l12 12.500-12 12.500-12-12.500z" stroke-linejoin="round" /></g></svg>
        <span>功能</span>
      </div>
      <div class="act hot">
        <svg width="60" height="60" viewBox="949 2118 60 60"><g fill="none" stroke="#d95b16" stroke-width="3"><circle cx="979" cy="2148" r="26.500" /><path d="M965 2148.500h28M979 2135v27" /></g></svg>
        <span>加自选</span>
      </div>
    </footer>

    <div class="keys">
      <svg width="38" height="38"><path d="M35.500 3v32q-1 2-3 0.500L3 20q-1.500-1 0-2.500L32.500 1.500q2-1 3 1.500z" fill="none" stroke="#999" stroke-width="2.800" /></svg>
      <svg width="38" height="38"><rect x="2" y="2" width="34" height="34" rx="7" fill="none" stroke="#999" stroke-width="2.800" /></svg>
      <svg width="38" height="38"><path d="M1 2.500h36M1 19h36M1 35.500h36" stroke="#999" stroke-width="3" /></svg>
    </div>
  </div>
</template>

<style>
body { margin: 0; background: #fefefe; }
</style>

<style scoped>
.screen { width: 1080px; height: 2376px; overflow: hidden; background: #fefefe; color: #2d2d2d; font-family: Inter, "Noto Sans CJK SC", sans-serif; }
.screen svg { display: block; flex: none; }
span, label, p { white-space: nowrap; }
span { display: inline-block; }
button { font: inherit; color: inherit; padding: 0; margin: 0; box-sizing: border-box; }
.green { color: #00a000; }
.red { color: #e02424; }

.status { height: 130px; box-sizing: border-box; padding: 0 0 0 79px; display: flex; align-items: center; }
.clock { font-size: 39px; font-weight: 600; color: #1a1a1a; }
.apps { display: flex; gap: 12px; margin-left: 25px; }
.dot { width: 12px; height: 12px; border-radius: 50%; background: #1a1a1a; margin-left: 23px; }
.sys { margin-left: 191px; }

.head { height: 125px; box-sizing: border-box; border-bottom: 2px solid #dcdcdc; display: grid; grid-template-columns: 83px 68px 1fr auto; padding-right: 28px; }
.back { margin: 29px 0 0 25px; }
.logo { width: 68px; height: 68px; margin-top: 23px; border-radius: 14px; background: #ff4500; color: #fff; display: flex; flex-direction: column; align-items: center; justify-content: center; }
.logo b { font-size: 25px; line-height: 28px; font-weight: 700; }
.title { padding-left: 288px; }
.name { display: flex; align-items: center; height: 66px; font-size: 47px; margin-left: 8px; }
.name span { margin-top: -7px; }
.name em { width: 39px; height: 39px; margin-left: 8px; border-radius: 50%; background: #5f8ce8; color: #fff; font: 700 25px/38px "Noto Sans CJK SC", sans-serif; text-align: center; }
.code { display: flex; align-items: center; height: 51px; font-size: 36px; color: #666; }
.code i { box-sizing: border-box; width: 35px; height: 37px; margin: 0 10px 0 3px; border: 2px solid #888; border-radius: 7px; font: normal 29px/33px Roboto, sans-serif; text-align: center; color: #666; }
.tools { display: flex; align-items: flex-start; padding-top: 27px; }
.tools svg:first-child { margin: -7px 41px 0 0; }
.tools svg:nth-child(2) { margin-right: 42px; }

.quote { height: 250px; box-sizing: border-box; padding: 14px 24px 0 25px; border-bottom: 2px solid #ececec; display: grid; grid-template-columns: 238px 1fr; column-gap: 26px; font-size: 40.500px; }
.price { height: 99px; line-height: 101px; font-size: 86px; font-weight: 600; margin-left: 0; }
.chg { height: 51px; line-height: 51px; font-size: 39px; display: flex; justify-content: space-between; margin-left: -2px; }
.cells { display: grid; grid-template-columns: 238px 238px 239px; column-gap: 26px; grid-auto-rows: 74px; }
.cell { display: flex; align-items: center; height: 74px; position: relative; }
.cell > label { color: #666; margin-top: -2px; }
.cell > span { margin-left: auto; }
.cell .tip { margin-left: 3px; margin-top: -6px; fill: none; stroke: #aaa; stroke-width: 2.200px; }
.pe .tip { margin-left: 25px; }
.tip path { fill: #aaa; stroke: none; }
.cell sup { position: absolute; left: 84px; top: 4px; font-size: 19px; line-height: 24px; color: #666; }
.cell .sm { font-size: 35px; }
.end { justify-content: flex-end; }
.more { width: 125px; height: 57px; border: 2px solid #e4e7ea; border-radius: 7px; background: #fff; font-size: 34px; line-height: 48px; margin-right: -1px; }

.notice { height: 105px; box-sizing: border-box; border-bottom: 2px solid #dcdcdc; display: flex; align-items: center; padding: 0 29px; font-size: 38px; }
.notice p { margin: -6px auto 0 31px; }

.tabs { height: 104px; box-sizing: border-box; border-bottom: 2px solid #dcdcdc; display: grid; grid-template-columns: 160px 171px 157px 160px 151px 158px auto; padding-left: 35px; align-items: center; font-size: 43.500px; color: #666; }
.tabs > span { line-height: 102px; position: relative; }
.tabs .on { color: #dd5a14; }
.tabs .on::after { content: ""; position: absolute; left: 2px; bottom: 7px; width: 60px; height: 7px; border-radius: 4px; background: #dd5a14; }
.tabs > span svg { display: inline-block; margin-left: 10px; vertical-align: 7px; }

.legend { display: grid; align-items: center; font-size: 38px; padding-left: 16px; }
.legend .it { display: flex; align-items: center; }
.legend .it svg { margin-left: 8px; }
.ma { height: 62px; font-size: 36px; grid-template-columns: 119px 202px 173px 256px 166px 132px; }
.vol { height: 61px; grid-template-columns: 154px 102px 164px 169px 158px 260px auto; }
.macd { height: 60px; grid-template-columns: 153px 187px 212px auto; }
.rsi { height: 61px; grid-template-columns: 97px 223px 238px auto; }
.vol .it svg { margin-left: 6px; }
.pick { display: flex; align-items: center; height: 47px; border: 2px solid #e4e7eb; border-radius: 8px; background: #f6f7fa; font-size: 36px; justify-content: space-between; }
.pick span { line-height: 40px; }
.p0 { width: 108px; padding: 0 7px 0 8px; }
.p1 { width: 151px; padding: 0 7px 0 3px; }
.p2 { width: 95px; padding: 0 7px 0 3px; }
.dk { width: 127px; padding: 0 5px 0 11px; }
.dk svg { align-self: flex-end; margin-bottom: 4px; }
.fq { width: 132px; padding: 0 0 0 10px; }
.k { color: #262626; }
.y { color: #f5bb46; }
.p { color: #cc1480; }
.g1 { color: #efc21d; }
.m { color: #d026d0; }
.g { color: #0f970f; }
.s { color: #888; }
.fold { width: 45px; height: 61px; background: #999; border-radius: 14px 0 0 14px; display: flex; align-items: center; justify-content: center; }
.lbl { font-size: 38px; fill: #888; }
.lt { font-size: 31px; fill: #ccc; }
.date { font-size: 38px; fill: #666; }

.slider { height: 66px; box-sizing: border-box; padding: 15px 12px 0; }
.rail { height: 18px; border-radius: 9px; background: #f0f1f4; display: flex; justify-content: space-between; align-items: center; padding: 0 6px; }
.rail i { width: 47px; height: 31px; border-radius: 8px; background: linear-gradient(#666, #666) 16px 50% / 2px 17px no-repeat, linear-gradient(#666, #666) 23px 50% / 2px 17px no-repeat, linear-gradient(#666, #666) 30px 50% / 2px 17px no-repeat, #fff; box-shadow: 0 0 5px rgba(0, 0, 0, .2); }

.banner { height: 90px; margin: 0 18px; border-radius: 45px; background: #fcede3; display: flex; align-items: center; padding-left: 30px; font-size: 38px; color: #dd5a14; }
.banner span { margin-left: 53px; margin-top: -3px; }
.banner i { width: 1.500px; height: 37px; background: #dd5a14; margin: 0 18px 0 56px; }

.foot { height: 136px; margin-top: 12px; box-sizing: border-box; border-top: 2px solid #d6d9dc; background: #f7f8fa; display: grid; grid-template-columns: 275px 200px 202px 201px 202px; color: #666; }
.index { padding: 8px 0 0 40px; }
.index svg { margin-left: 88px; }
.val { height: 65px; line-height: 67px; margin-left: 28px; font-size: 38px; color: #e02424; }
.sub { display: flex; align-items: center; height: 34px; font-size: 35px; }
.sub span { color: #e02424; margin-left: 50px; font-size: 36px; }
.act { display: flex; flex-direction: column; align-items: center; padding-top: 8px; font-size: 34px; }
.act span { line-height: 40px; margin-top: 18px; }
.hot { color: #dd5a14; }

.keys { height: 132px; display: flex; align-items: center; padding-left: 260px; gap: 230px; }
.keys svg:nth-child(3) { margin-left: -2px; }
</style>
